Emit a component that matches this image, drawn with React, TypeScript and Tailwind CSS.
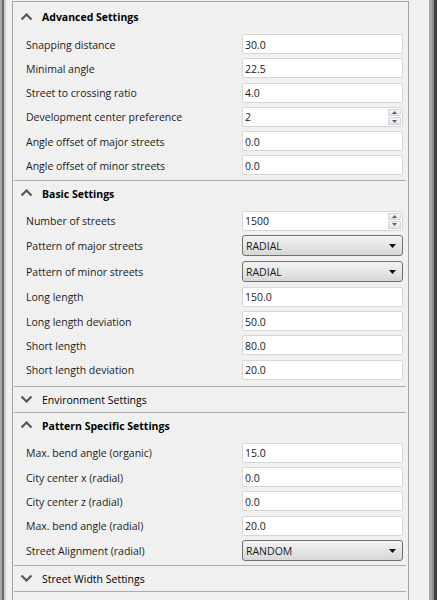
import React from "react";

type Field = {
  kind: "text" | "spin" | "combo";
  label: string;
  value: string;
};

type Section = {
  title: string;
  open: boolean;
  fields: Field[];
  padBottom: string;
};

const sections: Section[] = [
  {
    title: "Advanced Settings",
    open: true,
    padBottom: "pb-[2px]",
    fields: [
      { kind: "text", label: "Snapping distance", value: "30.0" },
      { kind: "text", label: "Minimal angle", value: "22.5" },
      { kind: "text", label: "Street to crossing ratio", value: "4.0" },
      { kind: "spin", label: "Development center preference", value: "2" },
      { kind: "text", label: "Angle offset of major streets", value: "0.0" },
      { kind: "text", label: "Angle offset of minor streets", value: "0.0" },
    ],
  },
  {
    title: "Basic Settings",
    open: true,
    padBottom: "pb-[4px]",
    fields: [
      { kind: "spin", label: "Number of streets", value: "1500" },
      { kind: "combo", label: "Pattern of major streets", value: "RADIAL" },
      { kind: "combo", label: "Pattern of minor streets", value: "RADIAL" },
      { kind: "text", label: "Long length", value: "150.0" },
      { kind: "text", label: "Long length deviation", value: "50.0" },
      { kind: "text", label: "Short length", value: "80.0" },
      { kind: "text", label: "Short length deviation", value: "20.0" },
    ],
  },
  { title: "Environment Settings", open: false, padBottom: "", fields: [] },
  {
    title: "Pattern Specific Settings",
    open: true,
    padBottom: "pb-[1px]",
    fields: [
      { kind: "text", label: "Max. bend angle (organic)", value: "15.0" },
      { kind: "text", label: "City center x (radial)", value: "0.0" },
      { kind: "text", label: "City center z (radial)", value: "0.0" },
      { kind: "text", label: "Max. bend angle (radial)", value: "20.0" },
      { kind: "combo", label: "Street Alignment (radial)", value: "RANDOM" },
    ],
  },
  { title: "Street Width Settings", open: false, padBottom: "", fields: [] },
];

function Chevron({ open }: { open: boolean }) {
  return (
    <svg width="13" height="8" viewBox="0 0 13 8" className="shrink-0">
      <polyline
        points={open ? "1.5,6.5 6.5,1.5 11.5,6.5" : "1.5,1.5 6.5,6.5 11.5,1.5"}
        fill="none"
        stroke="#5c5c5c"
        strokeWidth="2.3"
      />
    </svg>
  );
}

function TextBox({ value, spin }: { value: string; spin?: boolean }) {
  return (
    <div className="relative w-[161px] h-[20px] bg-white border border-[#d6d6d6] rounded-[2px] flex items-center pl-[2px]">
      <span className="pt-[2px] text-[#1a1a1a]">{value}</span>
      {spin && (
        <div className="absolute right-[1px] top-[1px] bottom-[1px] w-[13px] flex flex-col gap-[1px]">
          <div className="flex-1 flex items-center justify-center border border-[#d2d2d2] rounded-[1px] bg-gradient-to-b from-[#f7f7f7] to-[#e4e4e4]">
            <svg width="5" height="3" viewBox="0 0 5 3">
              <polygon points="0,3 2.5,0 5,3" fill="#4a5f8a" />
            </svg>
          </div>
          <div className="flex-1 flex items-center justify-center border border-[#d2d2d2] rounded-[1px] bg-gradient-to-b from-[#f7f7f7] to-[#e4e4e4]">
            <svg width="5" height="3" viewBox="0 0 5 3">
              <polygon points="0,0 5,0 2.5,3" fill="#4a5f8a" />
            </svg>
          </div>
        </div>
      )}
    </div>
  );
}

function ComboBox({ value }: { value: string }) {
  return (
    <div className="w-[161px] h-[21px] border border-[#707070] rounded-[3px] bg-gradient-to-b from-[#f3f3f3] via-[#e6e6e6] to-[#d7d7d7] flex items-center pl-[3px] pr-[6px]">
      <span className="flex-1 pt-[2px] text-[#1a1a1a]">{value}</span>
      <svg width="7" height="4" viewBox="0 0 7 4">
        <polygon points="0,0 7,0 3.5,4" fill="#111111" />
      </svg>
    </div>
  );
}

function Row({ field }: { field: Field }) {
  return (
    <div
      className={`flex items-center pl-[13px] pr-[5px] ${
        field.kind === "combo" ? "h-[26px]" : "h-[24.25px]"
      }`}
    >
      <span className="flex-1 pt-[2px] text-[#1b1b1b]">{field.label}</span>
      {field.kind === "combo" ? (
        <ComboBox value={field.value} />
      ) : (
        <TextBox value={field.value} spin={field.kind === "spin"} />
      )}
    </div>
  );
}

export default function App() {
  return (
    <div className="w-[437px] h-[600px] bg-[#f0f0f0] flex overflow-hidden font-['Open_Sans',sans-serif] text-[10.5px] leading-[15px]">
      <div className="w-[12px] flex shrink-0">
        <div className="w-[2px] bg-[#a9a9a9]" />
        <div className="w-[2px] bg-[#6b6b6b]" />
        <div className="w-[2px] bg-[#cfcfcf]" />
      </div>
      <div className="w-[397px] shrink-0 mt-[1px] border-l border-t border-r border-[#a3a3a3] pt-[2px]">
        {sections.map((s, i) => (
          <div key={s.title}>
            {i > 0 && <div className="ml-[1px] mr-[2px] border-t border-[#acacac]" />}
            <div className="h-[25px] flex items-center pl-[7px]">
              <Chevron open={s.open} />
              <span
                className={`ml-[9px] pt-[2px] text-black ${s.open ? "font-bold" : ""}`}
              >
                {s.title}
              </span>
            </div>
            {s.open && (
              <div className={`pt-[3px] ${s.padBottom}`}>
                {s.fields.map((f) => (
                  <Row key={f.label} field={f} />
                ))}
              </div>
            )}
          </div>
        ))}
        <div className="ml-[1px] mr-[2px] border-t border-[#acacac]" />
      </div>
      <div className="w-[20px] shrink-0" />
      <div className="w-[8px] flex shrink-0">
        <div className="w-[3px] bg-[#a6a6a6]" />
        <div className="w-[2px] bg-[#8f8f8f]" />
        <div className="w-[3px] bg-[#3f3f3f]" />
      </div>
    </div>
  );
}
